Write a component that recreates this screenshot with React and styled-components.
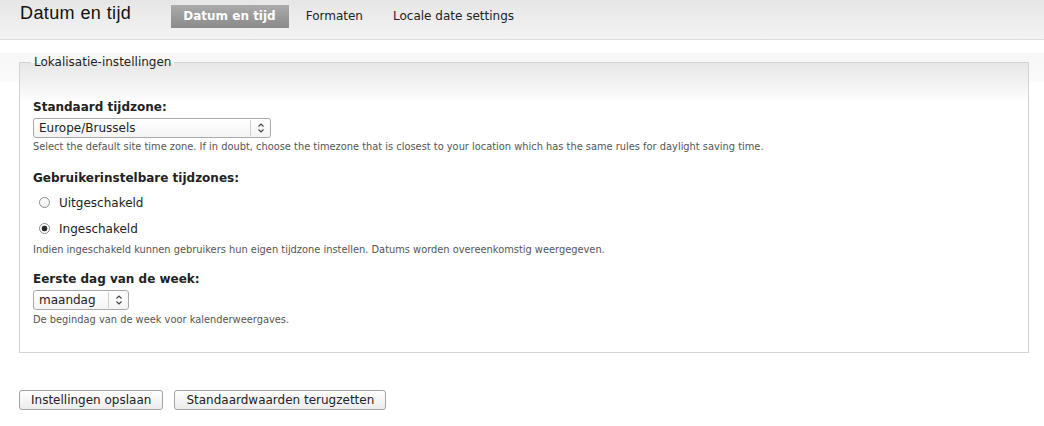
import styled, { createGlobalStyle } from 'styled-components'

const GlobalStyle = createGlobalStyle`
  body {
    margin: 0;
    background: #fff;
    font-family: "DejaVu Sans", Verdana, sans-serif;
    font-size: 12px;
    color: #222;
  }
`

const Header = styled.div`
  height: 39px;
  border-bottom: 1px solid #dcdcdc;
  background: linear-gradient(#e6e6e6, #f3f3f3);
  display: flex;
  align-items: flex-start;
  padding: 0 20px;
`

const Title = styled.h1`
  margin: 2px 40px 0 0;
  font-family: "Liberation Sans", Arial, sans-serif;
  font-size: 18px;
  line-height: 22px;
  font-weight: normal;
  color: #111;
  letter-spacing: 0.4px;
`

const Tabs = styled.ul`
  list-style: none;
  margin: 5px 0 0;
  padding: 0;
  display: flex;
  gap: 5px;
`

const Tab = styled.li`
  height: 23px;
  line-height: 23px;
  padding: 0 13px 0 12px;
  font-weight: ${p => (p.$active ? 'bold' : 'normal')};
  color: ${p => (p.$active ? '#fff' : '#222')};
  background: ${p => (p.$active ? 'linear-gradient(#ababab, #8a8a8a)' : 'transparent')};
`

const Page = styled.div`
  background: linear-gradient(#f7f7f7, #fbfbfb) top / 100% 29px no-repeat, #fff;
  padding: 0 15px 20px 19px;
`

const Fieldset = styled.fieldset`
  margin: 13px 0 0;
  padding: 27px 13px 25px;
  border: 1px solid #d3d3d3;
  background: linear-gradient(#e7e7e7, #fcfcfc) top / 100% 37px no-repeat, #fff;
  min-width: 0;
`

const Legend = styled.legend`
  padding: 0 3px;
  margin-left: -2px;
  line-height: 18px;
  color: #222;
`

const Item = styled.div`
  margin-top: ${p => p.$gap ?? 0}px;
`

const Label = styled.div`
  font-weight: bold;
  line-height: 18px;
  margin-bottom: 2px;
`

const SelectBox = styled.div`
  display: inline-flex;
  width: ${p => p.$width}px;
  height: 20px;
  box-sizing: border-box;
  border: 1px solid #a9a9a9;
  border-radius: 3px;
  background: linear-gradient(#fff, #f4f4f4);
  line-height: 18px;
  vertical-align: top;
`

const SelectValue = styled.span`
  flex: 1;
  padding-left: 5px;
  color: #222;
`

const SelectArrow = styled.span`
  width: 19px;
  display: flex;
  align-items: center;
  justify-content: center;
  border-left: 1px solid #cfcfcf;
  margin: 1px 0;
`

const Description = styled.div`
  font-size: 9.85px;
  line-height: 14px;
  color: #555;
  margin-top: ${p => p.$gap ?? 2}px;
`

const RadioList = styled.div`
  display: flex;
  flex-direction: column;
  gap: 8px;
  margin-top: 7px;
`

const RadioRow = styled.label`
  display: flex;
  align-items: center;
  height: 18px;
  line-height: 18px;
  padding-left: 6px;
`

const RadioDot = styled.span`
  width: 11px;
  height: 11px;
  box-sizing: border-box;
  border-radius: 50%;
  border: 1px solid #8c8c8c;
  background: ${p =>
    p.$checked
      ? 'radial-gradient(circle, #2a2a2a 0 2.6px, #fff 3.2px)'
      : 'linear-gradient(#fff, #f2f2f2)'};
  margin-right: 9px;
  margin-top: -1px;
`

const Actions = styled.div`
  display: flex;
  gap: 11px;
  margin-top: 37px;
`

const Button = styled.button`
  height: 20px;
  padding: 0 11px;
  font-family: "DejaVu Sans", Verdana, sans-serif;
  font-size: 12px;
  line-height: 18px;
  color: #222;
  border: 1px solid #a3a3a3;
  border-radius: 3px;
  background: linear-gradient(#fff, #ececec);
`

const Arrows = () => (
  <svg width="8" height="12" viewBox="0 0 8 12">
    <polyline points="1.5,4.5 4,2 6.5,4.5" fill="none" stroke="#444" strokeWidth="1.2" />
    <polyline points="1.5,7.5 4,10 6.5,7.5" fill="none" stroke="#444" strokeWidth="1.2" />
  </svg>
)

const Select = ({ value, width }) => (
  <SelectBox $width={width}>
    <SelectValue>{value}</SelectValue>
    <SelectArrow><Arrows /></SelectArrow>
  </SelectBox>
)

const Radio = ({ label, checked }) => (
  <RadioRow>
    <RadioDot $checked={checked} />
    {label}
  </RadioRow>
)

export default function App() {
  return (
    <>
      <GlobalStyle />
      <Header>
        <Title>Datum en tijd</Title>
        <Tabs>
          <Tab $active>Datum en tijd</Tab>
          <Tab>Formaten</Tab>
          <Tab>Locale date settings</Tab>
        </Tabs>
      </Header>
      <Page>
        <Fieldset>
          <Legend>Lokalisatie-instellingen</Legend>
          <Item>
            <Label>Standaard tijdzone:</Label>
            <Select value="Europe/Brussels" width={238} />
            <Description>
              Select the default site time zone. If in doubt, choose the timezone that is closest to your location which has the same rules for daylight saving time.
            </Description>
          </Item>
          <Item $gap={15}>
            <Label>Gebruikerinstelbare tijdzones:</Label>
            <RadioList>
              <Radio label="Uitgeschakeld" />
              <Radio label="Ingeschakeld" checked />
            </RadioList>
            <Description $gap={5}>
              Indien ingeschakeld kunnen gebruikers hun eigen tijdzone instellen. Datums worden overeenkomstig weergegeven.
            </Description>
          </Item>
          <Item $gap={13}>
            <Label>Eerste dag van de week:</Label>
            <Select value="maandag" width={96} />
            <Description $gap={3}>De begindag van de week voor kalenderweergaves.</Description>
          </Item>
        </Fieldset>
        <Actions>
          <Button>Instellingen opslaan</Button>
          <Button>Standaardwaarden terugzetten</Button>
        </Actions>
      </Page>
    </>
  )
}
